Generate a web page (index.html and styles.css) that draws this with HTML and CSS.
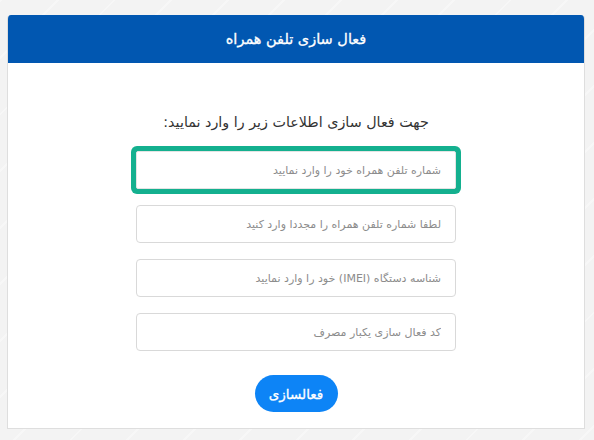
FILE: index.html
```html
<!DOCTYPE html>
<html lang="fa" dir="rtl">
<head>
<meta charset="utf-8">
<title>فعال سازی تلفن همراه</title>
<link rel="stylesheet" href="styles.css">
</head>
<body>
<div class="page">
  <div class="card">
    <div class="card-header">فعال سازی تلفن همراه</div>
    <div class="card-body">
      <p class="lead">جهت فعال سازی اطلاعات زیر را وارد نمایید:</p>
      <form class="form">
        <input class="field field-focus" type="text" placeholder="شماره تلفن همراه خود را وارد نمایید">
        <input class="field" type="text" placeholder="لطفا شماره تلفن همراه را مجددا وارد کنید">
        <input class="field" type="text" placeholder="شناسه دستگاه (IMEI) خود را وارد نمایید">
        <input class="field" type="text" placeholder="کد فعال سازی یکبار مصرف">
        <button class="btn" type="button">فعالسازی</button>
      </form>
    </div>
  </div>
</div>
</body>
</html>
```
FILE: styles.css
```css
html, body {
  margin: 0;
  padding: 0;
}
body {
  background-color: #f3f3f3;
  background-image: repeating-linear-gradient(135deg, rgba(255,255,255,0.35) 0 2px, rgba(255,255,255,0) 2px 40px);
  font-family: "DejaVu Sans", "Noto Sans", sans-serif;
  height: 440px;
  overflow: hidden;
}
.page {
  padding: 15px 9px 0 7px;
}
.card {
  background: #ffffff;
  border: 1px solid #dedede;
  border-top: 0;
  border-radius: 4px 4px 0 0;
  overflow: hidden;
}
.card-header {
  background: #0157b1;
  color: #ffffff;
  height: 48px;
  display: flex;
  align-items: center;
  justify-content: center;
  font-size: 14.5px;
  -webkit-text-stroke: 0.3px #ffffff;
}
.card-body {
  padding: 47px 0 16px;
  display: flex;
  flex-direction: column;
  align-items: center;
}
.lead {
  margin: 0;
  font-size: 14.3px;
  line-height: 24px;
  color: #333333;
}
.form {
  margin-top: 17px;
  display: flex;
  flex-direction: column;
  align-items: center;
  gap: 16px;
}
.field {
  box-sizing: border-box;
  width: 320px;
  height: 38px;
  border: 1px solid #d9d9d9;
  border-radius: 4px;
  padding: 0 14px;
  font-family: inherit;
  font-size: 11px;
  color: #555;
  background: #fff;
  outline: none;
  direction: rtl;
}
.field::placeholder {
  color: #8c8c8c;
}
.field-focus {
  box-shadow: 0 0 0 5px #14b08f;
  border-color: #e4e4e4;
  border-radius: 2px;
}
.btn {
  margin-top: 8px;
  width: 83px;
  height: 37px;
  border: 0;
  border-radius: 19px;
  background: #0d84f6;
  color: #ffffff;
  font-family: inherit;
  font-size: 13.5px;
  -webkit-text-stroke: 0.3px #ffffff;
}
```
